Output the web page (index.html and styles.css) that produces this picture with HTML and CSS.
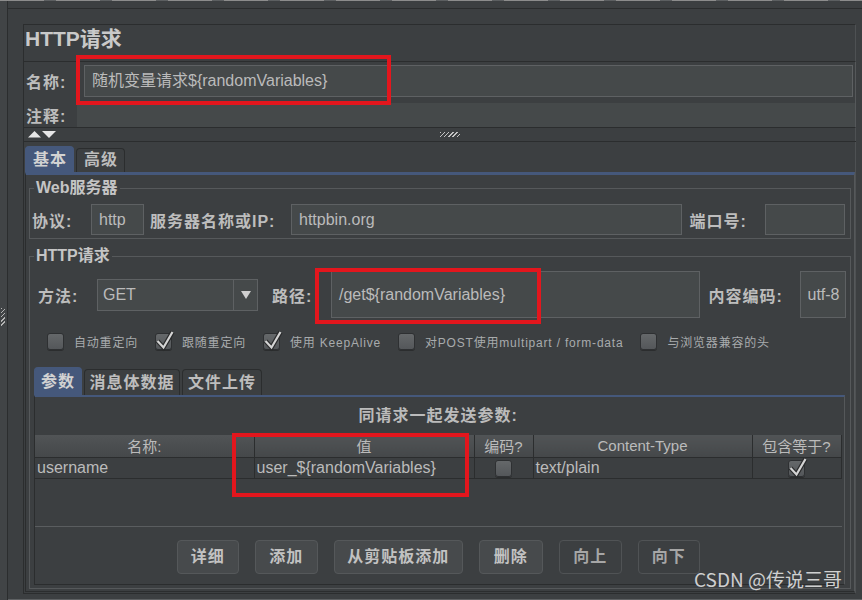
FILE: index.html
```html
<!DOCTYPE html>
<html lang="zh">
<head>
  <meta charset="UTF-8">
  <meta name="viewport" content="width=device-width, initial-scale=1.0">
  <title>HTTP请求</title>
  <link rel="stylesheet" href="styles.css">
</head>
<body>

  <div class="topline"></div>

  <div class="window">
    <!-- left splitter -->
    <div class="side"><span class="side-grip"></span></div>

    <div class="outer">
      <div class="panel">
        <h1 class="title">HTTP请求</h1>

        <!-- name / comment -->
        <div class="name-box">
          <div class="name-row">
            <span class="lbl name-label">名称:</span>
            <div class="field name-field">随机变量请求${randomVariables}</div>
          </div>
          <div class="comment-row">
            <span class="lbl comment-label">注释:</span>
            <div class="comment-field"></div>
          </div>
        </div>

        <div class="split-row">
          <svg class="arrows" width="30" height="7" viewBox="0 0 30 7">
            <polygon points="0,6.5 6.5,0 13,6.5" />
            <polygon points="14,0 28,0 21,7" />
          </svg>
          <span class="split-grip"></span>
        </div>

        <!-- main tabs -->
        <div class="tabbar">
          <span class="tab active">基本</span>
          <span class="tab">高级</span>
        </div>

        <div class="tab-body">
          <fieldset class="group">
            <legend>Web服务器</legend>
            <div class="form-row web-row">
              <span class="lbl proto-label">协议:</span>
              <div class="field proto-field">http</div>
              <span class="lbl host-label">服务器名称或IP:</span>
              <div class="field host-field">httpbin.org</div>
              <span class="lbl port-label">端口号:</span>
              <div class="field port-field"></div>
            </div>
          </fieldset>

          <fieldset class="group http-group">
            <legend>HTTP请求</legend>
            <div class="form-row method-row">
              <span class="lbl method-label">方法:</span>
              <div class="combo">
                <span class="combo-text">GET</span>
                <span class="combo-btn">
                  <svg width="10" height="8" viewBox="0 0 10 8"><polygon points="0,0 10,0 5,8" /></svg>
                </span>
              </div>
              <span class="lbl path-label">路径:</span>
              <div class="field path-field">/get${randomVariables}</div>
              <span class="lbl enc-label">内容编码:</span>
              <div class="field enc-field">utf-8</div>
            </div>

            <div class="form-row check-row">
              <span class="check-item"><span class="cb"></span>自动重定向</span>
              <span class="check-item"><span class="cb"><svg class="tick" width="22" height="22" viewBox="0 0 22 22"><polyline class="tick-dark" points="2.5,11 8.5,17.5 17.5,2" /><polyline class="tick-light" points="2.5,11 8.5,17.5 17.5,2" /></svg></span>跟随重定向</span>
              <span class="check-item"><span class="cb"><svg class="tick" width="22" height="22" viewBox="0 0 22 22"><polyline class="tick-dark" points="2.5,11 8.5,17.5 17.5,2" /><polyline class="tick-light" points="2.5,11 8.5,17.5 17.5,2" /></svg></span>使用 KeepAlive</span>
              <span class="check-item"><span class="cb"></span>对POST使用multipart / form-data</span>
              <span class="check-item"><span class="cb"></span>与浏览器兼容的头</span>
            </div>

            <!-- parameter tabs -->
            <div class="sub-tabbar">
              <span class="tab sub-tab st-params active">参数</span>
              <span class="tab sub-tab st-body">消息体数据</span>
              <span class="tab sub-tab st-files">文件上传</span>
            </div>

            <div class="param-body">
              <div class="param-title">同请求一起发送参数:</div>
              <div class="table-wrap">
                <table class="params">
                  <colgroup>
                    <col style="width: 219px">
                    <col style="width: 220px">
                    <col style="width: 59px">
                    <col style="width: 219px">
                    <col style="width: 89px">
                  </colgroup>
                  <tr>
                    <th>名称:</th>
                    <th>值</th>
                    <th>编码?</th>
                    <th>Content-Type</th>
                    <th>包含等于?</th>
                  </tr>
                  <tr>
                    <td>username</td>
                    <td>user_${randomVariables}</td>
                    <td class="center"><span class="cb"></span></td>
                    <td>text/plain</td>
                    <td class="center"><span class="cb"><svg class="tick" width="22" height="22" viewBox="0 0 22 22"><polyline class="tick-dark" points="2.5,11 8.5,17.5 17.5,2" /><polyline class="tick-light" points="2.5,11 8.5,17.5 17.5,2" /></svg></span></td>
                  </tr>
                </table>
              </div>

              <div class="buttons">
                <span class="btn btn-62">详细</span>
                <span class="btn btn-63">添加</span>
                <span class="btn btn-129">从剪贴板添加</span>
                <span class="btn btn-64">删除</span>
                <span class="btn btn-63 btn-flat">向上</span>
                <span class="btn btn-62 btn-flat">向下</span>
              </div>
            </div>
          </fieldset>
        </div>
      </div>
    </div>
  </div>

  <!-- annotations -->
  <div class="mark mark-name"></div>
  <div class="mark mark-path"></div>
  <div class="mark mark-value"></div>

  <div class="watermark">CSDN @传说三哥</div>

</body>
</html>
```

FILE: styles.css
```css
/* Reset */
* {
  box-sizing: border-box;
}

body {
  margin: 0;
  height: 600px;
  overflow: hidden;
  position: relative;
  background-color: #3c3f41;
  color: #bbbbbb;
  font-family: "Liberation Sans", "Noto Sans CJK SC", sans-serif;
  font-size: 16px;
}

.topline {
  height: 1px;
  background: repeating-linear-gradient(90deg, #8c8c8c 0 44px, #5c5f61 44px 56px);
}

.window {
  display: flex;
  height: 599px;
}

/* Left splitter strip */
.side {
  width: 8px;
  flex: none;
  background-color: #414446;
  border-right: 1px solid #2b2d2e;
  padding-top: 307px;
}

.side-grip {
  display: block;
  margin-left: 1px;
  width: 4px;
  height: 18px;
  background: repeating-linear-gradient(135deg, #b4b4b4 0 1px, transparent 1px 3px);
}

.outer {
  flex: 1;
  margin-top: 7px;
  border-top: 1px solid #2b2d2e;
  border-bottom: 1px solid #5e6163;
  padding: 15px 7px 0 15px;
}

.panel {
  border: 1px solid #2b2d2e;
  border-right-color: #4e5153;
  padding-bottom: 1px;
}

.title {
  margin: 0;
  height: 36px;
  padding-left: 1px;
  font-size: 21px;
  line-height: 28px;
  font-weight: bold;
  color: #c9c9c9;
}

/* Labels and fields */
.lbl {
  flex: none;
  font-weight: bold;
  letter-spacing: 1px;
  color: #bdbdbd;
  white-space: nowrap;
}

.field {
  flex: none;
  height: 32px;
  background-color: #45494a;
  border: 1px solid #5e6163;
  padding-left: 7px;
  line-height: 30px;
  white-space: nowrap;
  overflow: hidden;
  color: #bbbbbb;
}

.name-box {
  margin: 0 -1px;
  border: 1px solid #2b2d2e;
  border-right-color: #55585a;
  padding: 3px 0 0 2px;
}

.name-row {
  display: flex;
  align-items: center;
}

.name-label {
  width: 58px;
}

.name-field {
  flex: 1;
  margin-right: 2px;
}

.comment-row {
  display: flex;
  align-items: center;
  margin-top: 6px;
  height: 24px;
}

.comment-label {
  width: 51px;
}

.comment-field {
  flex: 1;
  height: 24px;
  background-color: #45494a;
}

/* Splitter row */
.split-row {
  display: flex;
  align-items: center;
  height: 14px;
  margin: 0 -1px;
  padding-left: 5px;
  border-bottom: 1px solid #2b2d2e;
}

.arrows {
  flex: none;
  fill: #e6e6e6;
}

.split-grip {
  margin-left: 382px;
  width: 20px;
  height: 5px;
  background: repeating-linear-gradient(135deg, #c4c4c4 0 1px, transparent 1px 3px);
}

/* Tabs */
.tabbar {
  display: flex;
  align-items: flex-end;
  height: 30px;
  padding-left: 1px;
}

.tab {
  height: 24px;
  padding: 0 6px 0 7px;
  margin-right: 2px;
  border: 1px solid #2b2d2e;
  border-bottom: none;
  border-radius: 4px 4px 0 0;
  font-weight: bold;
  letter-spacing: 1px;
  line-height: 22px;
  color: #bdbdbd;
}

.tab.active {
  height: 26px;
  line-height: 25px;
  background-color: #45587b;
  border-color: #45587b;
  color: #d2d2d2;
}

.tab-body {
  margin-left: 1px;
  border: 1px solid #2b2d2e;
  border-top: 3px solid #45587b;
  border-right-color: #55585a;
  padding: 3px 3px 2px 3px;
}

/* Titled groups */
.group {
  margin: 0;
  padding: 0 0 3px 0;
  min-width: 0;
  border: 1px solid #56595b;
}

.group legend {
  margin-left: 4px;
  padding: 0 2px;
  font-size: 16px;
  font-weight: bold;
  line-height: 20px;
  color: #c5c5c5;
}

.form-row {
  display: flex;
  align-items: center;
}

.web-row {
  margin-top: 6px;
  height: 31px;
  padding: 0 5px 0 2px;
}

.web-row .field {
  height: 31px;
  line-height: 29px;
}

.proto-label { width: 59px; }
.proto-field { width: 53px; }
.host-label { width: 141px; margin-left: 6px; }
.host-field { flex: 1; }
.port-label { width: 75px; margin-left: 8px; }
.port-field { width: 80px; }

.http-group {
  margin-top: 7px;
}

.method-row {
  margin-top: 5px;
  height: 47px;
  padding: 0 4px 0 8px;
}

.method-label { width: 59px; }

.combo {
  display: flex;
  flex: none;
  width: 161px;
  height: 32px;
  background-color: #45494a;
  border: 1px solid #5e6163;
}

.combo-text {
  flex: 1;
  padding-left: 5px;
  line-height: 30px;
}

.combo-btn {
  width: 24px;
  border-left: 1px solid #5e6163;
  display: flex;
  align-items: center;
  justify-content: center;
  fill: #cfcfcf;
}

.path-label { width: 59px; margin-left: 14px; }

.path-field {
  flex: 1;
  height: 47px;
  line-height: 45px;
}

.enc-label { width: 91px; margin-left: 9px; }

.enc-field {
  width: 46px;
  height: 47px;
  line-height: 45px;
}

/* Checkboxes */
.check-row {
  margin-top: 11px;
  height: 24px;
  padding-left: 17px;
  font-size: 12px;
  letter-spacing: 0.8px;
  color: #a8abad;
}

.check-item {
  display: flex;
  align-items: center;
  margin-right: 17px;
  white-space: nowrap;
}

.cb {
  position: relative;
  display: inline-block;
  width: 17px;
  height: 17px;
  margin-right: 10px;
  border: 1px solid #2e3032;
  border-radius: 3px;
  background: linear-gradient(#65686a, #54575a);
  box-shadow: 0 1px 0 #2b2d2e;
  vertical-align: middle;
}

.tick {
  position: absolute;
  left: -1px;
  top: -4px;
  fill: none;
}

.tick-dark {
  stroke: #2a2b2c;
  stroke-width: 4.5;
}

.tick-light {
  stroke: #d4d4d4;
  stroke-width: 2.2;
}

/* Parameter tabs */
.sub-tabbar {
  display: flex;
  align-items: flex-end;
  margin-top: 14px;
  height: 28px;
  padding-left: 4px;
}

.sub-tab {
  height: 26px;
  padding: 0;
  line-height: 25px;
  text-align: center;
}

.sub-tab.active {
  height: 28px;
  line-height: 27px;
}

.st-params { width: 48px; }
.st-body { width: 96px; }
.st-files { width: 80px; }

.param-body {
  margin: 0 5px 0 4px;
  border: 1px solid #2b2d2e;
  border-top: 2px solid #45587b;
  border-right-color: #55585a;
  padding: 8px 2px 10px 0;
}

.param-title {
  text-align: center;
  font-weight: bold;
  letter-spacing: 1px;
  line-height: 22px;
}

.table-wrap {
  margin-top: 8px;
  height: 92px;
  border-bottom: 1px solid #5a5d5f;
}

.params {
  border-collapse: collapse;
  table-layout: fixed;
  width: 806px;
}

.params th {
  height: 22px;
  padding: 0;
  font-size: 15px;
  font-weight: normal;
  color: #bbbbbb;
  background: linear-gradient(#515456, #45484a);
  border-right: 1px solid #2b2d2e;
  border-bottom: 1px solid #2b2d2e;
}

.params td {
  height: 21px;
  padding: 0 2px;
  white-space: nowrap;
  border-right: 1px solid #2b2d2e;
  border-bottom: 1px solid #2b2d2e;
}

.params td.center {
  text-align: center;
}

.params td .cb {
  margin-right: 0;
}

/* Buttons */
.buttons {
  display: flex;
  justify-content: center;
  gap: 16px;
  margin-top: 13px;
}

.btn {
  height: 34px;
  border: 1px solid #55585a;
  border-radius: 4px;
  background-color: #474a4c;
  text-align: center;
  line-height: 32px;
  font-weight: bold;
  letter-spacing: 1px;
  color: #c2c2c2;
}

.btn-flat {
  background-color: #3c3f41;
  border-color: #505355;
  color: #a6a6a6;
}

.btn-62 { width: 62px; }
.btn-63 { width: 63px; }
.btn-64 { width: 64px; }
.btn-129 { width: 129px; }

/* Red annotation boxes */
.mark {
  position: absolute;
  border: 4px solid #e3161d;
}

.mark-name {
  left: 76px;
  top: 55px;
  width: 315px;
  height: 50px;
}

.mark-path {
  left: 315px;
  top: 268px;
  width: 226px;
  height: 56px;
}

.mark-value {
  left: 232px;
  top: 433px;
  width: 237px;
  height: 64px;
}

.watermark {
  position: absolute;
  left: 694px;
  top: 567px;
  font-family: "Noto Sans CJK SC", sans-serif;
  font-size: 19px;
  line-height: 24px;
  color: rgba(235, 235, 235, 0.85);
}
```
